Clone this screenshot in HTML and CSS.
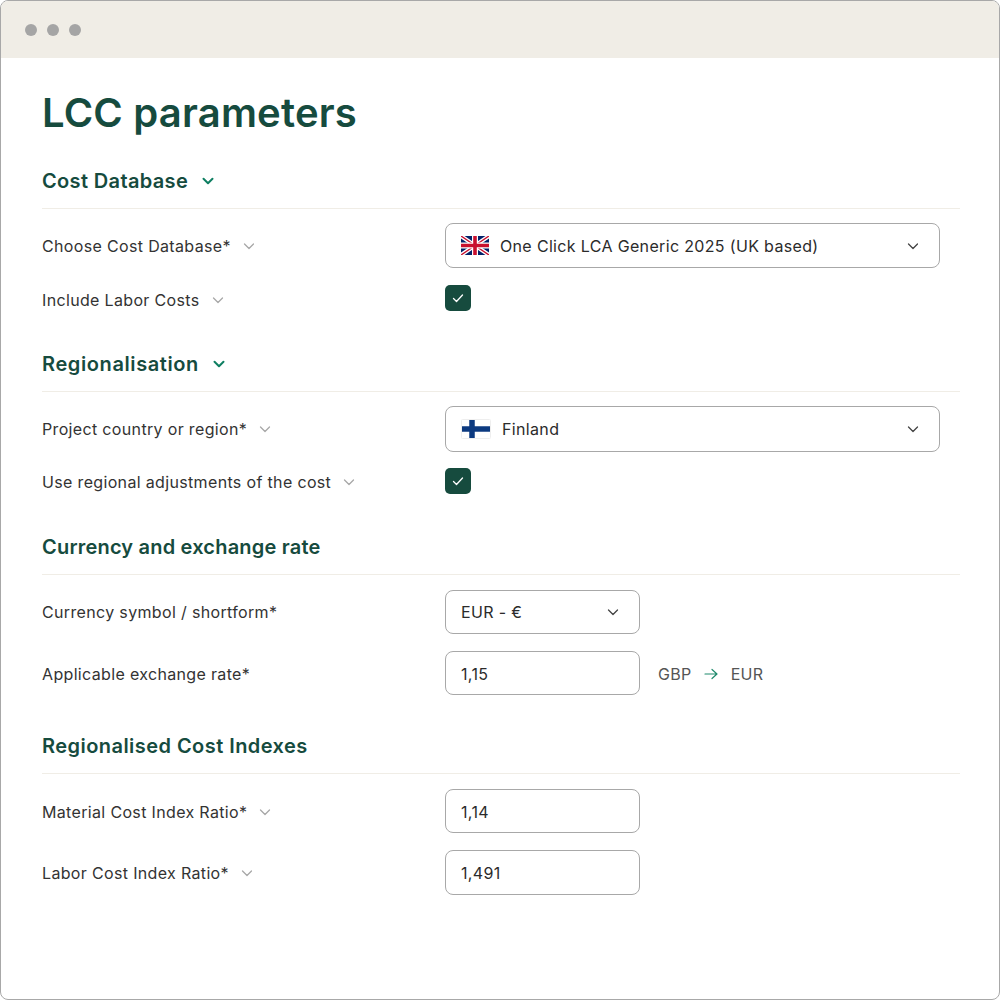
FILE: index.html
```html
<!DOCTYPE html>
<html lang="en">
<head>
<meta charset="utf-8">
<title>LCC parameters</title>
<link rel="stylesheet" href="styles.css">
</head>
<body>
<svg width="0" height="0" class="defs">
  <symbol id="chev" viewBox="0 0 12 12"><path d="M1.5 4l4.5 4.5L10.5 4" fill="none" stroke="currentColor" stroke-width="1.3" stroke-linecap="round" stroke-linejoin="round"/></symbol>
  <symbol id="chevb" viewBox="0 0 12 12"><path d="M1.5 3.8l4.5 4.5 4.5-4.5" fill="none" stroke="currentColor" stroke-width="2" stroke-linecap="round" stroke-linejoin="round"/></symbol>
  <symbol id="tick" viewBox="0 0 12 12"><path d="M1.5 6.5l3 3 6-6.5" fill="none" stroke="currentColor" stroke-width="1.3" stroke-linecap="round" stroke-linejoin="round"/></symbol>
</svg>
<div class="window">
  <div class="titlebar"><span class="dot"></span><span class="dot"></span><span class="dot"></span></div>
  <main class="content">
    <h1 class="title">LCC parameters</h1>

    <section class="section s1">
      <h2 class="heading">Cost Database <svg class="head-chev"><use href="#chevb"/></svg></h2>
      <div class="row r-select">
        <div class="label">Choose Cost Database* <svg class="label-chev"><use href="#chev"/></svg></div>
        <div class="select wide">
          <svg class="flag" viewBox="0 0 28 19">
            <rect width="28" height="19" fill="#012169"/>
            <path d="M0 0L28 19M28 0L0 19" stroke="#fff" stroke-width="4"/>
            <path d="M0 0L28 19M28 0L0 19" stroke="#c8102e" stroke-width="1.4"/>
            <path d="M14 0V19M0 9.5H28" stroke="#fff" stroke-width="6"/>
            <path d="M14 0V19M0 9.5H28" stroke="#c8102e" stroke-width="3.6"/>
          </svg>
          <span class="value">One Click LCA Generic 2025 (UK based)</span>
          <svg class="select-chev"><use href="#chev"/></svg>
        </div>
      </div>
      <div class="row r-check">
        <div class="label">Include Labor Costs <svg class="label-chev"><use href="#chev"/></svg></div>
        <div class="check"><svg><use href="#tick"/></svg></div>
      </div>
    </section>

    <section class="section s2">
      <h2 class="heading">Regionalisation <svg class="head-chev"><use href="#chevb"/></svg></h2>
      <div class="row r-select">
        <div class="label">Project country or region* <svg class="label-chev"><use href="#chev"/></svg></div>
        <div class="select wide">
          <svg class="flag fi" viewBox="0 0 30 20">
            <rect x="0.5" y="0.5" width="29" height="19" rx="1" fill="#fff" stroke="#eeeeee"/>
            <path d="M1 10H29" stroke="#0c3a80" stroke-width="5.5"/>
            <path d="M11 1V19" stroke="#0c3a80" stroke-width="5.5"/>
          </svg>
          <span class="value">Finland</span>
          <svg class="select-chev"><use href="#chev"/></svg>
        </div>
      </div>
      <div class="row r-check">
        <div class="label">Use regional adjustments of the cost <svg class="label-chev"><use href="#chev"/></svg></div>
        <div class="check"><svg><use href="#tick"/></svg></div>
      </div>
    </section>

    <section class="section s3">
      <h2 class="heading">Currency and exchange rate</h2>
      <div class="row r-field">
        <div class="label">Currency symbol / shortform*</div>
        <div class="select narrow">
          <span class="value">EUR - €</span>
          <svg class="select-chev"><use href="#chev"/></svg>
        </div>
      </div>
      <div class="row r-field r-low">
        <div class="label">Applicable exchange rate*</div>
        <div class="select narrow"><span class="value">1,15</span></div>
        <div class="pair">GBP
          <svg class="arrow" viewBox="0 0 14 12"><path d="M1 6H13M8 1.5L13 6L8 10.5" fill="none" stroke="#1f8a6c" stroke-width="1.2" stroke-linecap="round" stroke-linejoin="round"/></svg>
          EUR</div>
      </div>
    </section>

    <section class="section s4">
      <h2 class="heading">Regionalised Cost Indexes</h2>
      <div class="row r-field r-low">
        <div class="label">Material Cost Index Ratio* <svg class="label-chev"><use href="#chev"/></svg></div>
        <div class="select narrow"><span class="value">1,14</span></div>
      </div>
      <div class="row r-field r-tall">
        <div class="label">Labor Cost Index Ratio* <svg class="label-chev"><use href="#chev"/></svg></div>
        <div class="select narrow"><span class="value">1,491</span></div>
      </div>
    </section>
  </main>
</div>
</body>
</html>
```
FILE: styles.css
```css
* { box-sizing: border-box; }
html, body { margin: 0; padding: 0; background: #fff; }
body { font-family: Inter, "Liberation Sans", sans-serif; color: #333; }
.defs { position: absolute; }

.window {
  width: 1000px;
  height: 1000px;
  border: 1px solid #a8a8a8;
  border-radius: 8px;
  overflow: hidden;
  background: #fff;
}
.titlebar {
  height: 57px;
  background: #f0ede6;
  display: flex;
  align-items: center;
  gap: 10px;
  padding-left: 24px;
}
.dot { width: 12px; height: 12px; border-radius: 50%; background: #a5a5a5; }

.content { padding: 0 39px 0 41px; }
.title {
  margin: 31px 0 0;
  font-size: 40px;
  line-height: 48px;
  font-weight: 600;
  letter-spacing: 0.2px;
  color: #164b3e;
}
.section { display: flex; flex-direction: column; }
.s1 { margin-top: 29px; }
.s2 { margin-top: 38px; }
.s3 { margin-top: 38px; }
.s4 { margin-top: 36px; }

.heading {
  margin: 0;
  height: 43px;
  padding-bottom: 12px;
  display: flex;
  align-items: center;
  gap: 14px;
  font-size: 20px;
  font-weight: 600;
  letter-spacing: 0.35px;
  color: #164b3e;
  border-bottom: 1px solid #f0ede6;
}
.s2 .heading { letter-spacing: 0.6px; }
.s3 .heading { letter-spacing: 0.2px; }
.s4 .heading { letter-spacing: 0.45px; }
.head-chev { width: 12px; height: 12px; color: #0f7f62; }

.row { display: flex; align-items: center; font-size: 16px; letter-spacing: 0.34px; }
.r-select { height: 46px; margin-top: 14px; }
.r-check { height: 26px; margin-top: 16px; }
.s1 .r-select { height: 45px; }
.s1 .r-check { margin-top: 17px; }
.s1 .r-check .label { padding-top: 4px; }
.s2 .r-check .label { padding-top: 2px; }
.r-field { height: 44px; margin-top: 17px; }
.r-field:first-of-type { margin-top: 15px; }
.r-tall { height: 45px; }
.r-low .label, .r-low .value, .r-low .pair { padding-top: 2px; }

.label {
  width: 403px;
  flex: none;
  display: flex;
  align-items: center;
  gap: 12px;
  line-height: 20px;
}
.label-chev { width: 12px; height: 12px; color: #a8a8a8; }

.select {
  height: 100%;
  display: flex;
  align-items: center;
  border: 1px solid #a8a8a8;
  border-radius: 8px;
  padding: 0 20px 0 15px;
  color: #2b2b2b;
}
.wide { width: 495px; }
.narrow { width: 195px; }
.value { flex: 1; }
.select-chev { width: 12px; height: 12px; color: #444; flex: none; }
.flag { width: 28px; height: 19px; margin-right: 11px; flex: none; }
.fi { width: 30px; height: 20px; margin-right: 11px; }

.check {
  width: 26px;
  height: 26px;
  background: #164b3e;
  border-radius: 5px;
  display: flex;
  align-items: center;
  justify-content: center;
  color: #fff;
}
.check svg { width: 12px; height: 12px; }

.pair {
  margin-left: 18px;
  display: flex;
  align-items: center;
  gap: 12.5px;
  color: #555;
}
.arrow { width: 14px; height: 12px; }
```
